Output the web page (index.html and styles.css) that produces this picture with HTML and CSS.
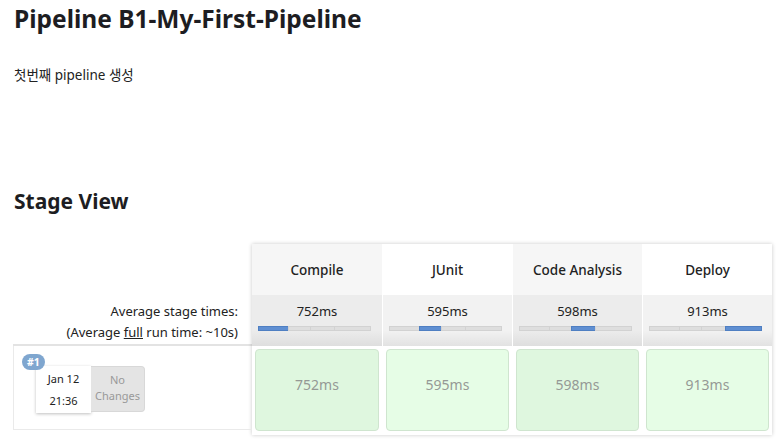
FILE: index.html
```html
<!DOCTYPE html>
<html lang="ko">
<head>
<meta charset="utf-8">
<link rel="stylesheet" href="styles.css">
</head>
<body>
<h1 class="title">Pipeline B1-My-First-Pipeline</h1>
<p class="desc">첫번째 pipeline 생성</p>
<h2 class="section">Stage View</h2>
<div class="stage-view">
  <div class="left">
    <div class="left-head"></div>
    <div class="left-avg">
      <div>Average stage times:</div>
      <div>(Average <span class="u">full</span> run time: ~10s)</div>
    </div>
    <div class="left-run">
      <span class="badge">#1</span>
      <div class="run-info">
        <div class="date"><div>Jan 12</div><div>21:36</div></div>
        <div class="changes">No<br>Changes</div>
      </div>
    </div>
  </div>
  <div class="stages">
    <div class="col odd">
      <div class="head">Compile</div>
      <div class="avg"><div class="ms">752ms</div>
        <div class="bar"><span class="seg on" style="width:30px"></span><span class="seg" style="width:22px"></span><span class="seg" style="width:24px"></span><span class="seg" style="width:37px"></span></div></div>
      <div class="run"><div class="cell">752ms</div></div>
    </div>
    <div class="col even">
      <div class="head">JUnit</div>
      <div class="avg"><div class="ms">595ms</div>
        <div class="bar"><span class="seg" style="width:30px"></span><span class="seg on" style="width:22px"></span><span class="seg" style="width:24px"></span><span class="seg" style="width:37px"></span></div></div>
      <div class="run"><div class="cell">595ms</div></div>
    </div>
    <div class="col odd">
      <div class="head">Code Analysis</div>
      <div class="avg"><div class="ms">598ms</div>
        <div class="bar"><span class="seg" style="width:30px"></span><span class="seg" style="width:22px"></span><span class="seg on" style="width:24px"></span><span class="seg" style="width:37px"></span></div></div>
      <div class="run"><div class="cell">598ms</div></div>
    </div>
    <div class="col even">
      <div class="head">Deploy</div>
      <div class="avg"><div class="ms">913ms</div>
        <div class="bar"><span class="seg" style="width:30px"></span><span class="seg" style="width:22px"></span><span class="seg" style="width:24px"></span><span class="seg on" style="width:37px"></span></div></div>
      <div class="run"><div class="cell">913ms</div></div>
    </div>
  </div>
</div>
</body>
</html>
```
FILE: styles.css
```css
* { box-sizing: border-box; }
html, body { margin: 0; padding: 0; background: #fff; }
body {
  font-family: "Noto Sans", "Noto Sans CJK KR", sans-serif;
  color: #1d1d22;
  padding: 0 0 0 14px;
  width: 781px;
  height: 440px;
  overflow: hidden;
}
.title {
  font-size: 24.5px;
  line-height: 32px;
  font-weight: 700;
  margin: 3px 0 0 0;
}
.desc {
  font-size: 13.5px;
  line-height: 18px;
  margin: 31px 0 0 0;
  color: #222;
}
.section {
  font-size: 21px;
  line-height: 28px;
  font-weight: 700;
  margin: 103px 0 0 0;
}
.stage-view {
  display: flex;
  margin-top: 29px;
  margin-left: -1px;
}
.left {
  width: 239px;
  display: flex;
  flex-direction: column;
}
.left-head { height: 51px; }
.left-avg {
  height: 51px;
  text-align: right;
  font-size: 13px;
  line-height: 21px;
  padding: 6px 14px 0 0;
  color: #222;
  border-bottom: 2px solid #e3e3e3;
}
.u { text-decoration: underline; }
.left-run {
  position: relative;
  height: 84px;
  border-left: 1px solid #eaeaea;
  border-bottom: 1px solid #eaeaea;
  padding: 20px 0 0 22px;
}
.badge {
  position: absolute;
  left: 8px;
  top: 8px;
  background: #7fa6cf;
  color: #fff;
  font-size: 10.5px;
  font-weight: 700;
  line-height: 16px;
  padding: 0 5px;
  border-radius: 8px;
  z-index: 2;
}
.run-info { display: flex; }
.date {
  width: 55px;
  height: 47px;
  background: #fff;
  box-shadow: 0 1px 3px rgba(0,0,0,.25);
  font-size: 11px;
  line-height: 22px;
  text-align: center;
  padding-top: 2px;
  color: #222;
}
.changes {
  width: 54px;
  height: 46px;
  background: #e4e4e4;
  border: 1px solid #d8d8d8;
  border-left: none;
  border-radius: 0 4px 4px 0;
  color: #999;
  font-size: 11px;
  line-height: 16px;
  text-align: center;
  padding-top: 5px;
}
.stages {
  display: flex;
  box-shadow: 0 0 4px rgba(0,0,0,.22);
  background: #fff;
  height: 191px;
}
.col {
  width: 130px;
  display: flex;
  flex-direction: column;
}
.col + .col { border-left: 1px solid #fff; }
.head {
  height: 51px;
  display: flex;
  align-items: center;
  justify-content: center;
  font-size: 13.5px;
  font-weight: 500;
  color: #222;
}
.odd .head { background: #f6f6f6; }
.even .head { background: #fff; }
.avg {
  height: 51px;
  padding: 7px 6px 0 6px;
  text-align: center;
  font-size: 13px;
  color: #222;
  background: linear-gradient(#ececec 70%, #dedede);
}
.even .avg { background: linear-gradient(#f2f2f2 70%, #e2e2e2); }
.avg .ms { line-height: 18px; }
.bar {
  display: flex;
  margin-top: 6px;
  height: 5px;
  width: 113px;
}
.seg {
  display: block;
  height: 5px;
  background: #dedede;
  border: 1px solid #d2d2d2;
  border-right: none;
}
.seg:first-child { border-left: 1px solid #d2d2d2; }
.seg:last-child { border-right: 1px solid #d2d2d2; }
.seg.on {
  background: #5f8fd2;
  border-color: #4f7fc2;
}
.run {
  flex: 1;
  padding: 3px;
}
.cell {
  height: 82px;
  border: 1px solid #cfe5cf;
  border-radius: 4px;
  display: flex;
  align-items: center;
  justify-content: center;
  padding-bottom: 12px;
  font-size: 14px;
  color: #959995;
}
.odd .cell { background: #dff7df; }
.even .cell { background: #e6fde6; }
```
